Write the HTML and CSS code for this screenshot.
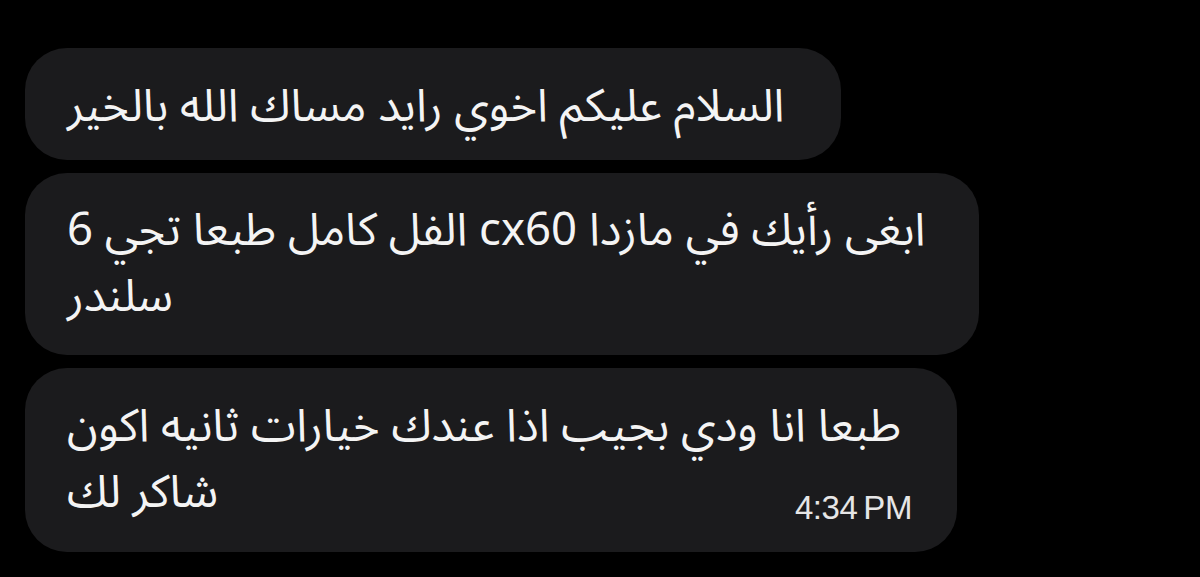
FILE: index.html
```html
<!DOCTYPE html>
<html lang="ar">
<head>
<meta charset="utf-8">
<title>Chat</title>
<link rel="stylesheet" href="styles.css">
</head>
<body>
<main class="thread">
  <div class="bubble bubble-one">السلام عليكم اخوي رايد مساك الله بالخير</div>
  <div class="bubble bubble-two">ابغى رأيك في مازدا cx60 الفل كامل طبعا تجي 6<br>سلندر</div>
  <div class="bubble bubble-three">طبعا انا ودي بجيب اذا عندك خيارات ثانيه اكون<br>شاكر لك<span class="time" dir="ltr">4:34 PM</span></div>
</main>
</body>
</html>
```

FILE: styles.css
```css
html, body {
  margin: 0;
  padding: 0;
  background: #000;
}

body {
  width: 1200px;
  height: 577px;
  overflow: hidden;
}

.thread {
  display: flex;
  flex-direction: column;
  align-items: flex-start;
  gap: 13px;
  padding: 48px 0 0 25px;
}

.bubble {
  position: relative;
  box-sizing: border-box;
  background: #1b1b1d;
  color: #f4f4f4;
  border-radius: 42px;
  padding: 23px 42px;
  direction: rtl;
  text-align: left;
  font-family: "Noto Sans Arabic", "Noto Sans Arabic UI", "DejaVu Sans", sans-serif;
  font-size: 45.5px;
  line-height: 66px;
  white-space: nowrap;
}

.bubble-one { width: 816px; padding-top: 26px; padding-bottom: 20px; }
.bubble-two { width: 954px; padding-top: 25px; padding-bottom: 25px; }
.bubble-three { width: 932px; padding-top: 26px; padding-bottom: 26px; }

.time {
  position: absolute;
  right: 45px;
  bottom: 28px;
  direction: ltr;
  font-family: "Liberation Sans", Arial, sans-serif;
  font-size: 33px;
  line-height: 33px;
  color: #e6e6e6;
  letter-spacing: -0.4px;
  word-spacing: -3px;
}
```
